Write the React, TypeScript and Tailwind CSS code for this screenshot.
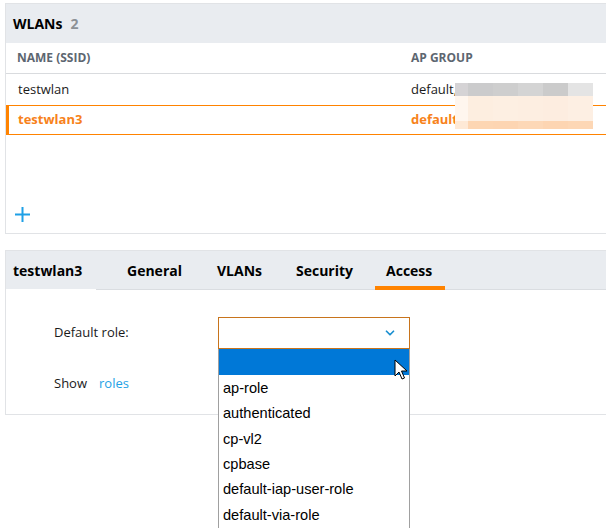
import { ChevronDown } from 'lucide-react';

const ui = { fontFamily: '"Open Sans", "Noto Sans", sans-serif' };
const sys = { fontFamily: '"Liberation Sans", Arial, sans-serif' };

const blurTop = ['#d5d3d5', '#cbcbcc', '#cecece', '#d4d4d4', '#cbcbcb', '#e4e4e4'];
const blurMid = ['#fff6ee', '#fdeee0', '#fdefe2', '#fdeee1', '#fdede0', '#fdefe3'];
const blurBot = ['#fee9d6', '#fdd6b3', '#fdd5b2', '#fdd8b7', '#fdd5b2', '#fdd7b5'];
const blurCols = ['w-[13px]', 'w-[25px]', 'w-[25px]', 'w-[25px]', 'w-[25px]', 'w-[25px]'];

const roles = [
  'ap-role',
  'authenticated',
  'cp-vl2',
  'cpbase',
  'default-iap-user-role',
  'default-via-role',
];

const tabs = [
  { label: 'General', cls: 'ml-[20px] px-[11px]' },
  { label: 'VLANs', cls: 'ml-[13px] px-[11px]' },
  { label: 'Security', cls: 'ml-[12px] px-[11px]' },
  { label: 'Access', cls: 'ml-[11px] pl-[11px] pr-[13px]' },
];

const Redaction = () => (
  <div className="absolute left-[455px] top-[83px] flex flex-col">
    {[
      { colors: blurTop, h: 'h-[13px]' },
      { colors: blurMid, h: 'h-[25px]' },
      { colors: blurBot, h: 'h-[8px]' },
    ].map((band, i) => (
      <div key={i} className={`flex ${band.h}`}>
        {band.colors.map((c, j) => (
          <div key={j} className={`${blurCols[j]} h-full`} style={{ backgroundColor: c }} />
        ))}
      </div>
    ))}
  </div>
);

const Cursor = () => (
  <svg
    className="absolute left-[394px] top-[359px]"
    width="14"
    height="22"
    viewBox="0 0 14 22"
  >
    <path
      d="M1 1 L1 17 L5 13 L8 20 L10.5 19 L7.5 12 L13 12 Z"
      fill="#fff"
      stroke="#000"
      strokeWidth="1"
      strokeLinejoin="miter"
    />
  </svg>
);

export default function App() {
  return (
    <div className="relative h-[528px] w-[606px] overflow-hidden bg-white pt-[3px] text-[13px] text-[#1a1a1a]" style={ui}>
      {/* WLANs list */}
      <div className="ml-[5px] flex h-[231px] flex-col border border-r-0 border-[#e1e3e6]">
        <div className="flex h-[39px] items-center gap-[8px] bg-[#e9ecf0] pl-[7px] text-[14px] font-bold">
          <span className="text-black">WLANs</span>
          <span className="text-[#8c9196]">2</span>
        </div>
        <div className="flex h-[31px] items-center border-b border-[#d9dbde] text-[12px] font-bold uppercase text-[#5d6670]">
          <span className="w-[405px] pl-[11px]">Name (SSID)</span>
          <span>AP Group</span>
        </div>
        <div className="flex h-[31px] items-center">
          <span className="w-[405px] pl-[12px]">testwlan</span>
          <span>default,</span>
        </div>
        <div className="flex h-[30px] items-center border-y border-[#ff8300] font-bold text-[#f7821b]">
          <div className="h-full w-[3px] bg-[#ff8300]" />
          <span className="w-[402px] pl-[9px]">testwlan3</span>
          <span>default</span>
        </div>
        <div className="flex flex-1 items-end pb-[10px] pl-[8px]">
          <svg width="17" height="17" viewBox="0 0 17 17" className="text-[#1ea0e6]">
            <path d="M8.5 1 V16 M1 8.5 H16" stroke="currentColor" strokeWidth="2" />
          </svg>
        </div>
      </div>

      {/* detail panel */}
      <div className="ml-[5px] mt-[16px] flex h-[165px] flex-col border border-r-0 border-[#e1e3e6]">
        <div className="flex h-[39px] bg-[#e9ecf0] text-[14px] font-bold text-black">
          <div className="flex w-[90px] items-center border-b border-white pl-[7px]">testwlan3</div>
          <div className="flex flex-1 items-stretch border-b border-[#dadde1]">
            {tabs.map((t) => (
              <div key={t.label} className={`relative flex items-center ${t.cls}`}>
                {t.label}
                {t.label === 'Access' && (
                  <div className="absolute bottom-[-1px] left-0 right-0 h-[4px] bg-[#ff8300]" />
                )}
              </div>
            ))}
          </div>
        </div>
        <div className="flex flex-col pl-[48px] pt-[27px]">
          <div className="flex items-center">
            <span className="w-[164px]">Default role:</span>
            <div className="flex h-[32px] w-[192px] items-center justify-end border border-[#c8741c] pr-[12px]">
              <ChevronDown size={14} strokeWidth={3} className="text-[#1a8fd0]" />
            </div>
          </div>
          <div className="mt-[25px] flex items-center gap-[12px]">
            <span>Show</span>
            <span className="text-[#1ea1e6]">roles</span>
          </div>
        </div>
      </div>

      {/* open select list */}
      <div
        className="absolute left-[218px] top-[349px] flex h-[200px] w-[192px] flex-col overflow-hidden border-x border-[#a0a0a0] bg-white text-[14.6px] text-black"
        style={sys}
      >
        <div className="mb-[1px] h-[26px] shrink-0 bg-[#0078d7]" />
        {roles.map((r) => (
          <div key={r} className="flex h-[25.4px] shrink-0 items-center pl-[4px]">
            {r}
          </div>
        ))}
      </div>

      <Redaction />
      <Cursor />
    </div>
  );
}
